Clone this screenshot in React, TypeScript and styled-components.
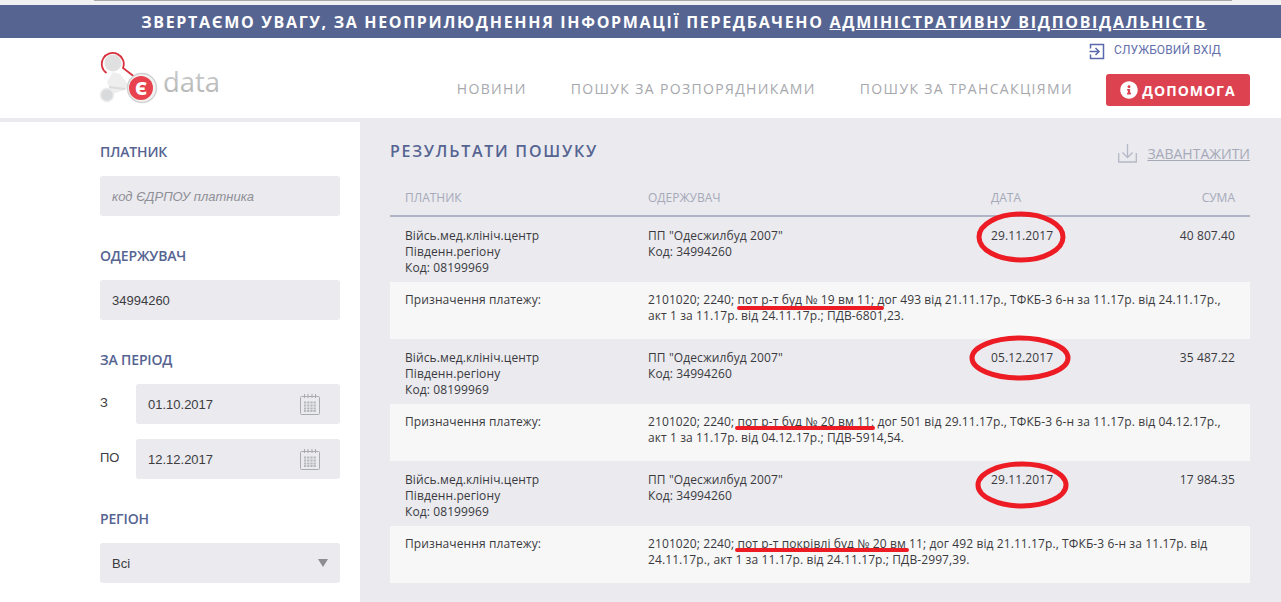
import React from 'react';
import styled, { createGlobalStyle } from 'styled-components';
import { FaInfoCircle } from 'react-icons/fa';

const GlobalStyle = createGlobalStyle`
  html, body {
    margin: 0;
    padding: 0;
    height: 602px;
    overflow: hidden;
    background: #eaeaef;
  }
  * { box-sizing: border-box; }
`;

const Page = styled.div`
  position: relative;
  width: 1281px;
  height: 602px;
  overflow: hidden;
  font-family: 'Open Sans', sans-serif;
`;

const BrowserStrip = styled.div`
  height: 5px;
  background: #f1f1f1;
  padding: 0 49px 0 94px;
`;

const StripLine = styled.div`
  height: 1px;
  background: #a8a8a8;
`;

const Banner = styled.div`
  height: 33px;
  padding-left: 67px;
  background: #566492;
  color: #fff;
  font-size: 16px;
  font-weight: 700;
  letter-spacing: 1.68px;
  line-height: 34px;
  text-align: center;
  white-space: nowrap;
  a {
    color: #fff;
    text-decoration: underline;
  }
`;

const Header = styled.header`
  height: 80px;
  background: #fff;
  display: flex;
  justify-content: space-between;
  padding: 0 31px 0 98px;
`;

const LogoBox = styled.div`
  padding-top: 14px;
`;

const HeaderRight = styled.div`
  display: flex;
  flex-direction: column;
  align-items: flex-end;
`;

const ServiceLogin = styled.a`
  display: flex;
  align-items: flex-start;
  gap: 9px;
  height: 36px;
  padding: 5px 29px 0 0;
  color: #6570ad;
  font-family: Roboto, sans-serif;
  font-size: 12px;
  line-height: 14px;
  letter-spacing: 0.1px;
`;

const Nav = styled.nav`
  display: flex;
  align-items: center;
`;

const NavLink = styled.a`
  margin: -3px 44px 0 0;
  color: #a6a8ad;
  font-size: 14px;
  letter-spacing: 1.35px;
  white-space: nowrap;
  &:last-of-type {
    margin-right: 33px;
  }
`;

const HelpButton = styled.button`
  display: flex;
  align-items: center;
  justify-content: center;
  gap: 4px;
  width: 144px;
  height: 32px;
  border: 0;
  border-radius: 3px;
  background: #dd4250;
  color: #fff;
  font-family: inherit;
  font-size: 14px;
  font-weight: 700;
  letter-spacing: 1px;
  svg {
    width: 18px;
    height: 18px;
  }
`;

const Body = styled.div`
  display: flex;
  height: 484px;
  padding-top: 4px;
  background: #eaeaef;
`;

const Sidebar = styled.aside`
  width: 360px;
  height: 480px;
  background: #fff;
  padding: 20px 20px 0 100px;
`;

const FieldLabel = styled.div`
  height: 20px;
  margin-bottom: 14px;
  color: #566492;
  font-size: 14px;
  font-weight: 600;
  line-height: 20px;
  letter-spacing: -0.15px;
`;

const FieldBlock = styled.div`
  margin-bottom: 30px;
`;

const InputBox = styled.div<{ $muted?: boolean }>`
  display: flex;
  align-items: center;
  justify-content: space-between;
  flex: 1;
  height: 40px;
  padding: 0 12px;
  background: #eaeaef;
  border-radius: 3px;
  color: ${(p) => (p.$muted ? '#8f8f96' : '#3c3c40')};
  font-family: 'Liberation Sans', Arial, sans-serif;
  font-size: 13px;
  font-style: ${(p) => (p.$muted ? 'italic' : 'normal')};
`;

const DateRow = styled.div`
  display: flex;
  align-items: center;
  margin-bottom: 15px;
  svg {
    margin-right: 8px;
  }
`;

const DateLabel = styled.span`
  width: 36px;
  margin-top: -4px;
  color: #3c3c40;
  font-family: 'Liberation Sans', Arial, sans-serif;
  font-size: 13px;
`;

const SelectArrow = styled.span`
  width: 0;
  height: 0;
  border-left: 5px solid transparent;
  border-right: 5px solid transparent;
  border-top: 8px solid #8d8d92;
`;

const Main = styled.main`
  flex: 1;
  padding: 0 31px 0 30px;
`;

const ResultsTop = styled.div`
  display: flex;
  align-items: center;
  justify-content: space-between;
  height: 60px;
`;

const Title = styled.h2`
  margin: -2px 0 0;
  color: #566492;
  font-size: 16px;
  font-weight: 600;
  letter-spacing: 1.75px;
`;

const Download = styled.a`
  display: flex;
  align-items: center;
  gap: 10px;
  margin-top: 2px;
  color: #a6a9b8;
  font-size: 14px;
  text-decoration: underline;
`;

const TableHead = styled.div`
  display: grid;
  grid-template-columns: 243px 343px 1fr auto;
  align-items: center;
  height: 35px;
  padding: 0 15px 2px;
  border-bottom: 2px solid #b0b3c4;
  color: #a6a9b8;
  font-size: 12px;
`;

const Row = styled.div`
  display: grid;
  grid-template-columns: 243px 343px 1fr auto;
  height: 65px;
  padding: 11px 15px 0;
  color: #3a3a3e;
  font-size: 12px;
  line-height: 16px;
  letter-spacing: 0.1px;
`;

const PurposeRow = styled.div`
  display: grid;
  grid-template-columns: 243px 1fr;
  height: 57px;
  padding: 10px 15px 0;
  background: #f7f7f7;
  color: #3a3a3e;
  font-size: 12px;
  line-height: 16px;
  letter-spacing: 0.1px;
`;

const Marks = styled.svg`
  position: absolute;
  top: 0;
  left: 0;
  pointer-events: none;
`;

const Logo = () => (
  <svg width="126" height="54" viewBox="0 0 126 54">
    <defs>
      <linearGradient id="dataGrey" x1="0" y1="0" x2="0" y2="1">
        <stop offset="0" stopColor="#d2d3d3" />
        <stop offset="1" stopColor="#aeb0b0" />
      </linearGradient>
    </defs>
    <path d="M9 30 L15 20 L22 22 L33 36 L14 42 Z" fill="#eeeeee" />
    <circle cx="15" cy="11" r="8.5" fill="#e0e0e0" />
    <path
      d="M8.5 21 A 11 11 0 1 1 25 16 L 38 26"
      fill="none"
      stroke="#d8313d"
      strokeWidth="1.8"
    />
    <path d="M11 35 L27 37" stroke="#dadbdb" strokeWidth="2" />
    <circle cx="9" cy="43" r="6.5" fill="#d9dadb" stroke="#ececec" strokeWidth="1.5" />
    <circle cx="44" cy="36" r="14.5" fill="#f2f2f2" stroke="#d2d2d2" strokeWidth="1.5" />
    <circle cx="43" cy="36" r="12" fill="#e8424e" />
    <text
      x="43"
      y="42.5"
      textAnchor="middle"
      fontFamily="'Open Sans', sans-serif"
      fontSize="18"
      fontWeight="800"
      fill="#fff"
    >
      Є
    </text>
    <text
      x="65"
      y="40"
      fontFamily="'Open Sans', sans-serif"
      fontSize="27"
      fill="url(#dataGrey)"
      textLength="57"
      lengthAdjust="spacingAndGlyphs"
    >
      data
    </text>
  </svg>
);

const LoginIcon = () => (
  <svg width="16" height="17" viewBox="0 0 16 17" fill="none" stroke="#5a69ad" strokeWidth="1.5">
    <path d="M1.5 5.5 V1.5 H14.5 V15.5 H1.5 V11.5" />
    <path d="M0.5 8.5 H9.5 M6.5 5 L10 8.5 L6.5 12" />
  </svg>
);

const CalendarIcon = () => (
  <svg width="20" height="21" viewBox="0 0 20 21" fill="none" stroke="#a9abb0">
    <rect x="0.5" y="2.5" width="19" height="18" rx="1" />
    <path d="M4.5 0 V4 M8 0 V4 M12 0 V4 M15.5 0 V4" />
    <path
      d="M4 8.5 H16 M4 11.5 H16 M4 14.5 H16 M4 17 H16"
      stroke="#b5b7bc"
      strokeWidth="2"
      strokeDasharray="2.2 1"
    />
  </svg>
);

const DownloadIcon = () => (
  <svg width="19" height="19" viewBox="0 0 19 19" fill="none" stroke="#b5b8c6" strokeWidth="1.3">
    <path d="M0.7 9 V18 H18.3 V9" />
    <path d="M9.5 0 V13 M4.5 8.5 L9.5 13.5 L14.5 8.5" />
  </svg>
);

type Payment = {
  date: string;
  amount: string;
  purpose: [string, string];
};

const payments: Payment[] = [
  {
    date: '29.11.2017',
    amount: '40 807.40',
    purpose: [
      '2101020; 2240; пот р-т буд № 19 вм 11; дог 493 від 21.11.17р., ТФКБ-3 6-н за 11.17р. від 24.11.17р.,',
      'акт 1 за 11.17р. від 24.11.17р.; ПДВ-6801,23.',
    ],
  },
  {
    date: '05.12.2017',
    amount: '35 487.22',
    purpose: [
      '2101020; 2240; пот р-т буд № 20 вм 11; дог 501 від 29.11.17р., ТФКБ-3 6-н за 11.17р. від 04.12.17р.,',
      'акт 1 за 11.17р. від 04.12.17р.; ПДВ-5914,54.',
    ],
  },
  {
    date: '29.11.2017',
    amount: '17 984.35',
    purpose: [
      '2101020; 2240; пот р-т покрівлі буд № 20 вм 11; дог 492 від 21.11.17р., ТФКБ-3 6-н за 11.17р. від',
      '24.11.17р., акт 1 за 11.17р. від 24.11.17р.; ПДВ-2997,39.',
    ],
  },
];

export default function App(): JSX.Element {
  return (
    <Page>
      <GlobalStyle />
      <BrowserStrip>
        <StripLine />
      </BrowserStrip>
      <Banner>
        ЗВЕРТАЄМО УВАГУ, ЗА НЕОПРИЛЮДНЕННЯ ІНФОРМАЦІЇ ПЕРЕДБАЧЕНО <a>АДМІНІСТРАТИВНУ ВІДПОВІДАЛЬНІСТЬ</a>
      </Banner>
      <Header>
        <LogoBox>
          <Logo />
        </LogoBox>
        <HeaderRight>
          <ServiceLogin>
            <LoginIcon />
            СЛУЖБОВИЙ ВХІД
          </ServiceLogin>
          <Nav>
            <NavLink>НОВИНИ</NavLink>
            <NavLink>ПОШУК ЗА РОЗПОРЯДНИКАМИ</NavLink>
            <NavLink>ПОШУК ЗА ТРАНСАКЦІЯМИ</NavLink>
            <HelpButton>
              <FaInfoCircle />
              ДОПОМОГА
            </HelpButton>
          </Nav>
        </HeaderRight>
      </Header>
      <Body>
        <Sidebar>
          <FieldBlock>
            <FieldLabel>ПЛАТНИК</FieldLabel>
            <InputBox $muted>код ЄДРПОУ платника</InputBox>
          </FieldBlock>
          <FieldBlock>
            <FieldLabel>ОДЕРЖУВАЧ</FieldLabel>
            <InputBox>34994260</InputBox>
          </FieldBlock>
          <FieldBlock>
            <FieldLabel>ЗА ПЕРІОД</FieldLabel>
            <DateRow>
              <DateLabel>З</DateLabel>
              <InputBox>
                01.10.2017
                <CalendarIcon />
              </InputBox>
            </DateRow>
            <DateRow>
              <DateLabel>ПО</DateLabel>
              <InputBox>
                12.12.2017
                <CalendarIcon />
              </InputBox>
            </DateRow>
          </FieldBlock>
          <FieldBlock>
            <FieldLabel>РЕГІОН</FieldLabel>
            <InputBox>
              Всі
              <SelectArrow />
            </InputBox>
          </FieldBlock>
        </Sidebar>
        <Main>
          <ResultsTop>
            <Title>РЕЗУЛЬТАТИ ПОШУКУ</Title>
            <Download>
              <DownloadIcon />
              ЗАВАНТАЖИТИ
            </Download>
          </ResultsTop>
          <TableHead>
            <span>ПЛАТНИК</span>
            <span>ОДЕРЖУВАЧ</span>
            <span>ДАТА</span>
            <span>СУМА</span>
          </TableHead>
          {payments.map((payment, i) => (
            <React.Fragment key={i}>
              <Row>
                <div>
                  Війсь.мед.клініч.центр
                  <br />
                  Південн.регіону
                  <br />
                  Код: 08199969
                </div>
                <div>
                  ПП "Одесжилбуд 2007"
                  <br />
                  Код: 34994260
                </div>
                <div>{payment.date}</div>
                <div>{payment.amount}</div>
              </Row>
              <PurposeRow>
                <div>Призначення платежу:</div>
                <div>
                  {payment.purpose[0]}
                  <br />
                  {payment.purpose[1]}
                </div>
              </PurposeRow>
            </React.Fragment>
          ))}
        </Main>
      </Body>
      <Marks width="1281" height="602" viewBox="0 0 1281 602" fill="none" stroke="#ed1c24">
        <ellipse cx="1021" cy="237" rx="42" ry="23" strokeWidth="5" />
        <ellipse cx="1020" cy="358" rx="48" ry="20" strokeWidth="5" />
        <ellipse cx="1022" cy="485" rx="44" ry="21" strokeWidth="5" />
        <path d="M739 308 H882 M737 428 H873 M737 550 H907" strokeWidth="4" strokeLinecap="round" />
      </Marks>
    </Page>
  );
}
